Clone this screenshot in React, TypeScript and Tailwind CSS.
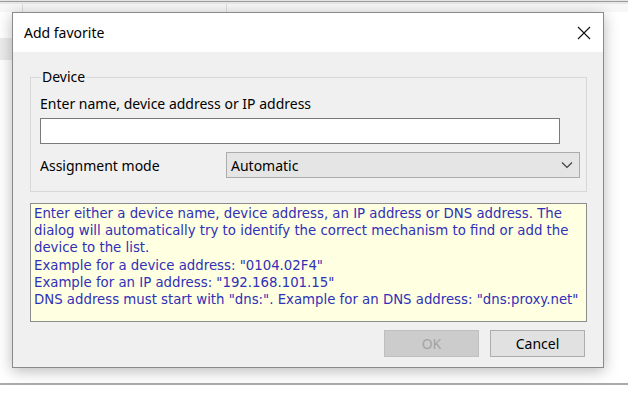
const ui = "font-['Noto_Sans',sans-serif] text-[14px] text-black";

const Chevron = () => (
  <svg width="12" height="8" viewBox="0 0 12 8" fill="none">
    <path d="M1 1.5 L6 6.5 L11 1.5" stroke="#404040" strokeWidth="1.2" />
  </svg>
);

export default function App() {
  return (
    <div className="relative w-[628px] h-[396px] overflow-hidden bg-white">
      {/* window behind the dialog */}
      <div className="absolute inset-x-0 top-0 h-[12px] bg-[#f7f7f7]">
        <div className="h-[1px] bg-[#e4e4e4]" />
        <div className="h-[1px] bg-[#9c9c9c]" />
        <div className="h-[2px] bg-[#e8e8e8]" />
        <div className="absolute left-[22px] top-[4px] bottom-0 w-px bg-[#dcdcdc]" />
        <div className="absolute left-[226px] top-[4px] bottom-0 w-px bg-[#dcdcdc]" />
      </div>
      <div className="absolute left-0 top-[38px] w-[12px] h-[22px] bg-[#ececec]" />
      <div className="absolute inset-x-0 top-[383px] h-[2px] bg-[#ababab]" />

      {/* dialog */}
      <div
        className={`absolute left-[12px] top-[12px] w-[592px] h-[356px] flex flex-col border border-[#8a8a8a] bg-[#f0f0f0] shadow-[0_3px_14px_rgba(0,0,0,0.28)] ${ui}`}
      >
        <div className="h-[39px] shrink-0 bg-white flex items-center justify-between pl-[11px] pr-[12px]">
          <span className="text-[14px] leading-none pt-px">Add favorite</span>
          <svg width="14" height="14" viewBox="0 0 14 14">
            <path d="M1 1 L13 13 M13 1 L1 13" stroke="#111" strokeWidth="1.1" />
          </svg>
        </div>

        <div className="flex-1 flex flex-col pl-[17px] pr-[16px] pt-[17px]">
          <fieldset className="border border-[#d8d8d8] h-[123px] pl-[9px] pr-[6px]">
            <legend className="ml-[1px] px-[1px] leading-[16px]">Device</legend>
            <div className="leading-[18px] mt-[10px]">Enter name, device address or IP address</div>
            <div className="mt-[5px] h-[26px] w-[520px] border border-[#7a7a7a] bg-white" />
            <div className="mt-[8px] flex items-center h-[26px]">
              <span className="w-[186px]">Assignment mode</span>
              <div className="flex-1 h-[26px] flex items-center justify-between border border-[#acacac] bg-[#e5e5e5] pl-[4px] pr-[6px]">
                <span>Automatic</span>
                <Chevron />
              </div>
            </div>
          </fieldset>

          <div className="mt-[11px] h-[119px] border border-[#8c8c8c] bg-[#ffffe1] px-[3px] pt-[1px] font-['DejaVu_Sans',sans-serif] text-[13.3px] leading-[17.2px] text-[#3030b8] whitespace-nowrap">
            <p>
              Enter either a device name, device address, an IP address or DNS address. The
              <br />
              dialog will automatically try to identify the correct mechanism to find or add the
              <br />
              device to the list.
            </p>
            <p>Example for a device address: "0104.02F4"</p>
            <p>Example for an IP address: "192.168.101.15"</p>
            <p>DNS address must start with "dns:". Example for an DNS address: "dns:proxy.net"</p>
          </div>

          <div className="mt-[8px] flex justify-end gap-[11px] pr-[2px]">
            <button className="w-[95px] h-[27px] border border-[#bfbfbf] bg-[#cccccc] text-[#a3a3a3]">OK</button>
            <button className="w-[95px] h-[27px] border border-[#adadad] bg-[#e1e1e1]">Cancel</button>
          </div>
        </div>
      </div>
    </div>
  );
}
